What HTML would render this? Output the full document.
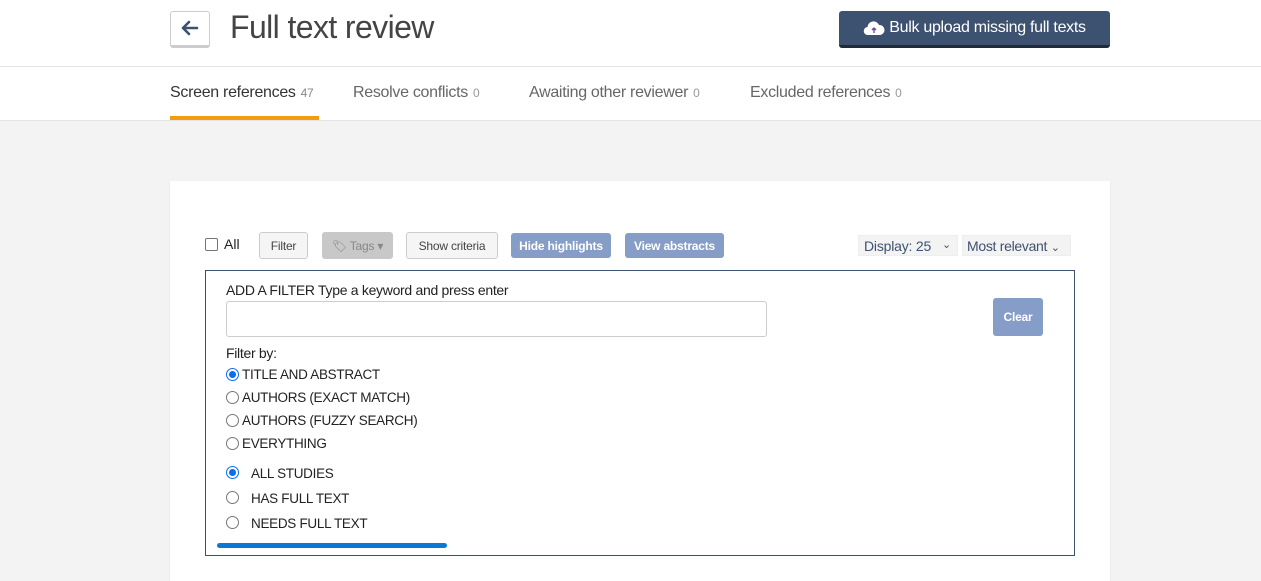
<!DOCTYPE html>
<html><head><meta charset="utf-8"><style>
*{box-sizing:border-box;margin:0;padding:0}
body{width:1261px;height:557px;overflow:hidden;background:#f3f3f3;font-family:"Liberation Sans",sans-serif;position:relative;color:#333}
.a{position:absolute}
.hdr{left:0;top:0;width:1261px;height:120px;background:#fff}
.btn{position:absolute;border-radius:3px;font-size:12px;display:flex;align-items:center;justify-content:center;letter-spacing:-0.2px}
.radio{position:absolute;width:13px;height:13px;border:1px solid #767676;border-radius:50%;background:#fff}
.radio.on{border:1px solid #0a6cf0}
.radio.on::after{content:"";position:absolute;left:2px;top:2px;width:7px;height:7px;border-radius:50%;background:#0a6cf0}
.lbl{position:absolute;font-size:13.5px;color:#222;letter-spacing:-0.3px}
.tab{position:absolute;top:84px;font-size:16px;color:#666;letter-spacing:-0.3px}
.tab span{font-size:12px;color:#999;margin-left:5px}
</style></head><body>
<div class="a hdr"></div>
<div class="a" style="left:170px;top:11px;width:40px;height:37px;border:1px solid #ccc;border-bottom:3px solid #ccc;border-radius:3px;background:#fff"></div>
<svg class="a" style="left:178px;top:17px" width="24" height="22" viewBox="0 0 24 22"><path d="M19 11H5M11 5L5 11L11 17" stroke="#3d5170" stroke-width="2.6" fill="none" stroke-linecap="round" stroke-linejoin="round"/></svg>
<div class="a" style="left:230px;top:9px;font-size:32px;color:#444;letter-spacing:-0.6px">Full text review</div>
<div class="a" style="left:839px;top:11px;width:271px;height:37px;background:#3d5170;border-radius:3px;border-bottom:3px solid #1f2a3a;color:#fff;font-size:16px;display:flex;align-items:center;justify-content:center;gap:4px;letter-spacing:-0.3px"><svg width="22" height="16" viewBox="0 0 22 16"><path d="M5 15a4 4 0 0 1-.5-8A6 6 0 0 1 16 5a4.5 4.5 0 0 1 1 10z" fill="#fff"/><path d="M11 13V8M9 10l2-2 2 2" stroke="#6a3fa0" stroke-width="1.3" fill="none"/></svg>Bulk upload missing full texts</div>
<div class="a" style="left:0;top:66px;width:1261px;height:1px;background:#e3e3e3"></div>
<div class="a" style="left:0;top:120px;width:1261px;height:1px;background:#e3e3e3"></div>
<div class="tab" style="left:170px;color:#333">Screen references<span style="color:#888">47</span></div>
<div class="a" style="left:170px;top:116px;width:149px;height:4px;background:#f39c12"></div>
<div class="tab" style="left:353px">Resolve conflicts<span>0</span></div>
<div class="tab" style="left:529px">Awaiting other reviewer<span>0</span></div>
<div class="tab" style="left:750px">Excluded references<span>0</span></div>
<div class="a" style="left:170px;top:181px;width:940px;height:400px;background:#fff;box-shadow:0 1px 2px rgba(0,0,0,.08)"></div>
<div class="a" style="left:205px;top:238px;width:13px;height:13px;border:1px solid #767676;border-radius:2px"></div>
<div class="a" style="left:224px;top:236px;font-size:14px;color:#222">All</div>
<div class="btn" style="left:259px;top:232px;width:49px;height:27px;border:1px solid #ccc;background:#f5f5f5;color:#444">Filter</div>
<div class="btn" style="left:322px;top:232px;width:71px;height:27px;background:#c8c8c8;color:#888">🏷 Tags ▾</div>
<div class="btn" style="left:406px;top:232px;width:92px;height:27px;border:1px solid #ccc;background:#f5f5f5;color:#444">Show criteria</div>
<div class="btn" style="left:511px;top:233px;width:100px;height:25px;background:#859dc7;color:#fff;font-weight:bold">Hide highlights</div>
<div class="btn" style="left:625px;top:233px;width:99px;height:25px;background:#859dc7;color:#fff;font-weight:bold">View abstracts</div>
<div class="a" style="left:858px;top:235px;width:100px;height:21px;background:#f3f3f3;border:1px solid #eee;font-size:14px;color:#3d5170;padding:2px 5px;letter-spacing:-0.2px">Display: 25 <span style="position:absolute;right:6px;font-size:11px">⌄</span></div>
<div class="a" style="left:962px;top:235px;width:109px;height:21px;background:#f3f3f3;border:1px solid #eee;font-size:14px;color:#3d5170;padding:2px 4px;letter-spacing:-0.3px">Most relevant <span style="font-size:11px">⌄</span></div>
<div class="a" style="left:205px;top:270px;width:870px;height:286px;border:1px solid #3d5170;background:#fff"></div>
<div class="a" style="left:226px;top:282px;font-size:14px;color:#222;letter-spacing:-0.3px">ADD A FILTER Type a keyword and press enter</div>
<div class="a" style="left:226px;top:301px;width:541px;height:36px;border:1px solid #ccc;border-radius:3px"></div>
<div class="btn" style="left:993px;top:298px;width:50px;height:38px;background:#859dc7;color:#fff;font-weight:bold">Clear</div>
<div class="a" style="left:226px;top:345px;font-size:14px;color:#222;letter-spacing:-0.3px">Filter by:</div>
<div class="radio on" style="left:226px;top:368px"></div><div class="lbl" style="left:242px;top:367px">TITLE AND ABSTRACT</div>
<div class="radio" style="left:226px;top:391px"></div><div class="lbl" style="left:242px;top:390px">AUTHORS (EXACT MATCH)</div>
<div class="radio" style="left:226px;top:414px"></div><div class="lbl" style="left:242px;top:413px">AUTHORS (FUZZY SEARCH)</div>
<div class="radio" style="left:226px;top:437px"></div><div class="lbl" style="left:242px;top:436px">EVERYTHING</div>
<div class="radio on" style="left:226px;top:466px"></div><div class="lbl" style="left:251px;top:466px">ALL STUDIES</div>
<div class="radio" style="left:226px;top:491px"></div><div class="lbl" style="left:251px;top:491px">HAS FULL TEXT</div>
<div class="radio" style="left:226px;top:516px"></div><div class="lbl" style="left:251px;top:516px">NEEDS FULL TEXT</div>
<div class="a" style="left:217px;top:543px;width:230px;height:5px;border-radius:3px;background:#0a78d4"></div>
</body></html>
